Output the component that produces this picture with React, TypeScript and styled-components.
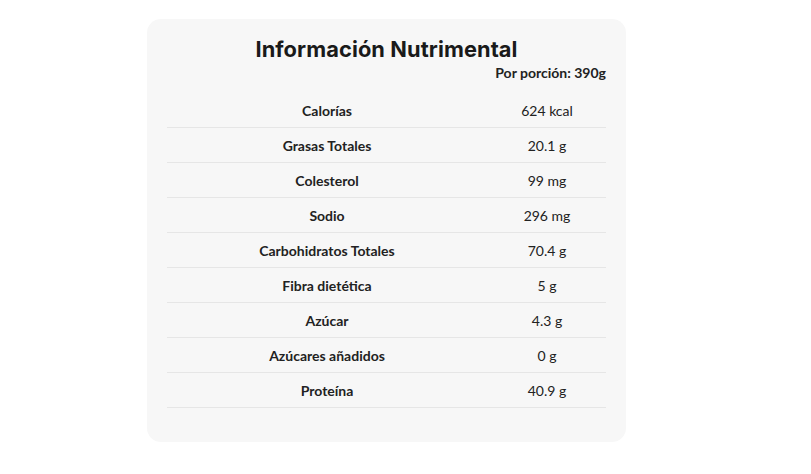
import React from "react";
import styled, { createGlobalStyle } from "styled-components";

const Global = createGlobalStyle`
  html, body { margin: 0; padding: 0; background: #ffffff; }
  body { font-family: Lato, "Liberation Sans", sans-serif; color: #222; }
`;

const Page = styled.div`
  width: 811px;
  height: 474px;
  display: flex;
  justify-content: flex-start;
  align-items: flex-start;
  padding: 19px 0 0 147px;
  box-sizing: border-box;
`;

const Card = styled.section`
  width: 479px;
  box-sizing: border-box;
  background: #f7f7f7;
  border-radius: 14px;
  padding: 17px 20px 34px;
  display: flex;
  flex-direction: column;
`;

const Title = styled.h2`
  margin: 0;
  text-align: center;
  font-family: Inter, "Open Sans", sans-serif;
  font-weight: 700;
  font-size: 21.8px;
  line-height: 26px;
  color: #1a1a1a;
  letter-spacing: 0.1px;
`;

const Serving = styled.div`
  text-align: right;
  font-family: Lato, sans-serif;
  font-weight: 700;
  font-size: 14px;
  line-height: 18px;
  margin-top: 2px;
  color: #222;
`;

const Table = styled.div`
  margin-top: 11px;
  display: flex;
  flex-direction: column;
`;

const Row = styled.div`
  display: grid;
  grid-template-columns: 320px 120px;
  height: 35px;
  align-items: center;
  border-bottom: 1px solid #e6e6e6;
  box-sizing: border-box;
`;

const Cell = styled.div<{ $bold?: boolean }>`
  text-align: center;
  font-family: Lato, sans-serif;
  font-size: 14px;
  font-weight: ${(p) => (p.$bold ? 700 : 400)};
  color: #222;
`;

const rows: [string, string][] = [
  ["Calorías", "624 kcal"],
  ["Grasas Totales", "20.1 g"],
  ["Colesterol", "99 mg"],
  ["Sodio", "296 mg"],
  ["Carbohidratos Totales", "70.4 g"],
  ["Fibra dietética", "5 g"],
  ["Azúcar", "4.3 g"],
  ["Azúcares añadidos", "0 g"],
  ["Proteína", "40.9 g"],
];

export default function App() {
  return (
    <>
      <Global />
      <Page>
        <Card>
          <Title>Información Nutrimental</Title>
          <Serving>Por porción: 390g</Serving>
          <Table>
            {rows.map(([k, v]) => (
              <Row key={k}>
                <Cell $bold>{k}</Cell>
                <Cell>{v}</Cell>
              </Row>
            ))}
          </Table>
        </Card>
      </Page>
    </>
  );
}
